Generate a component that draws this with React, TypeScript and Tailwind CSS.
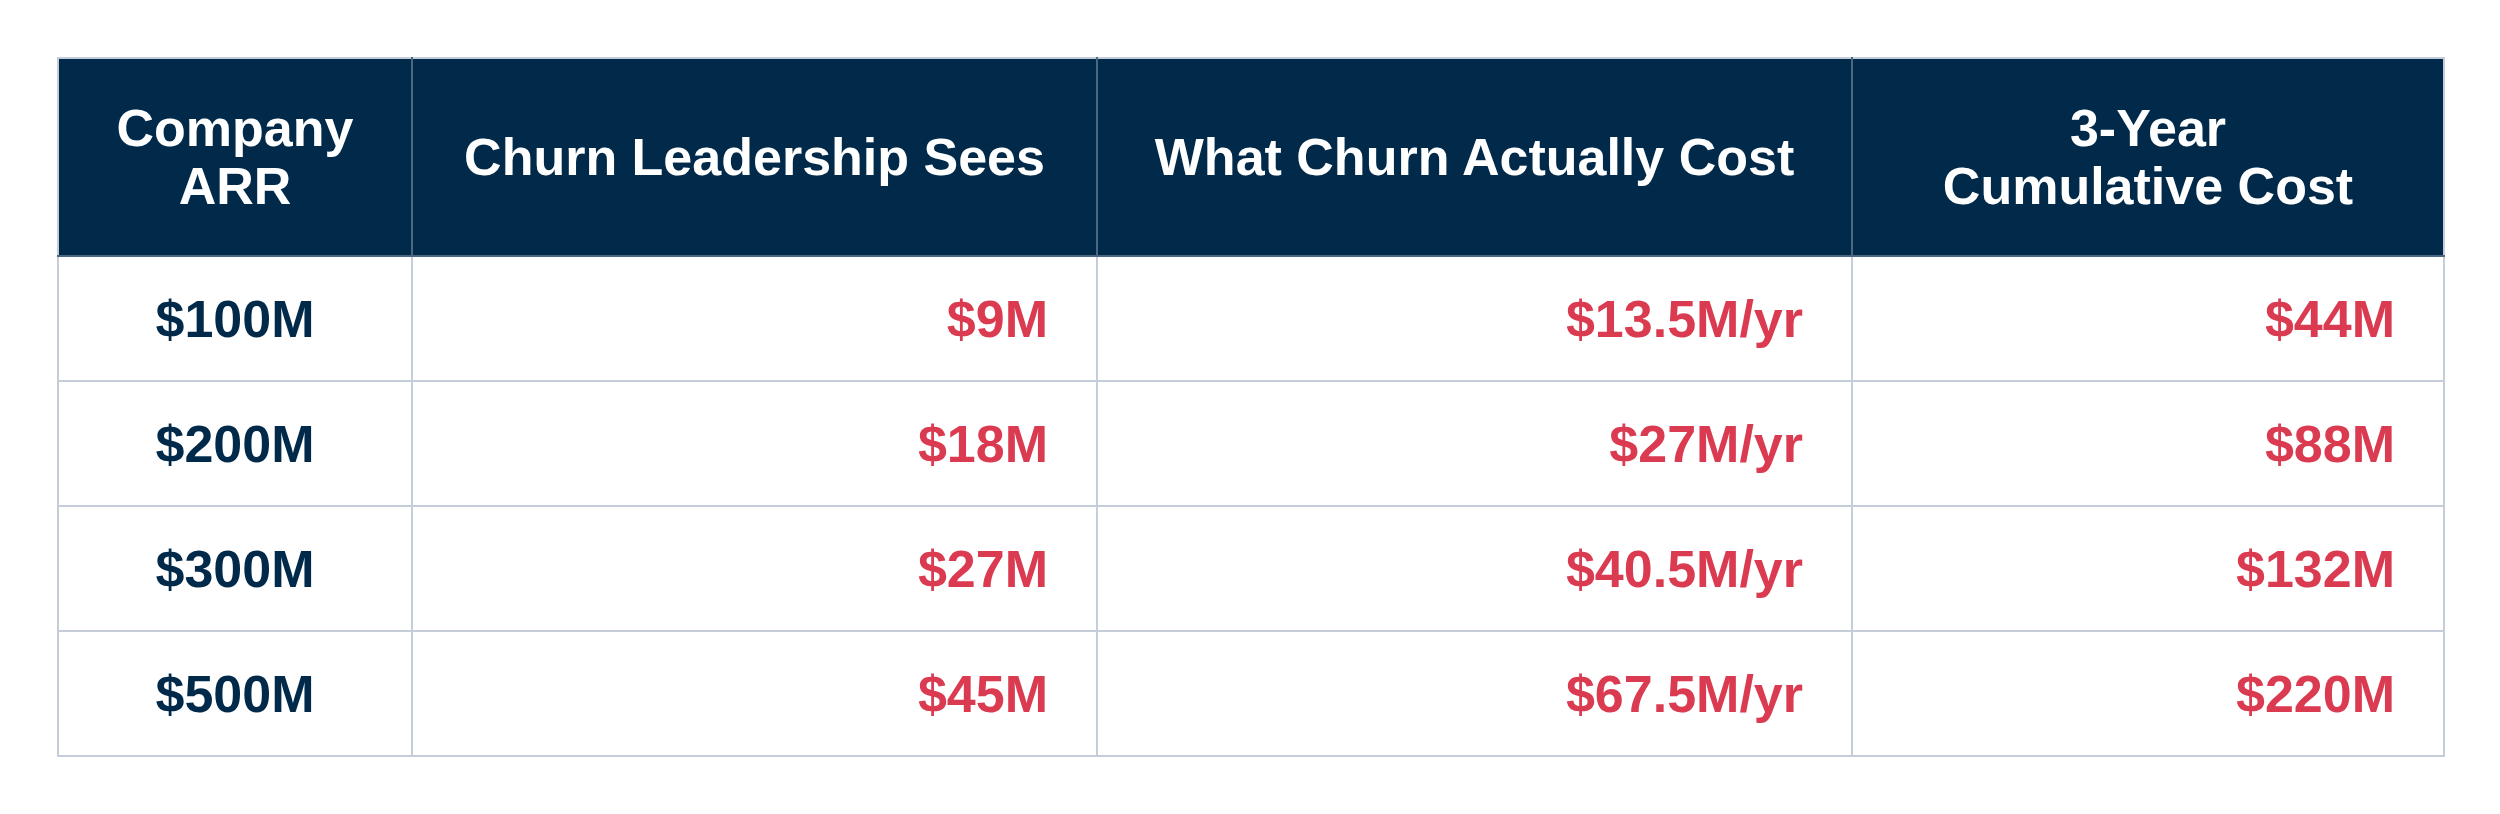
import React from 'react';

type Row = {
  arr: string;
  seen: string;
  actual: string;
  cumulative: string;
};

const rows: Row[] = [
  { arr: '$100M', seen: '$9M', actual: '$13.5M/yr', cumulative: '$44M' },
  { arr: '$200M', seen: '$18M', actual: '$27M/yr', cumulative: '$88M' },
  { arr: '$300M', seen: '$27M', actual: '$40.5M/yr', cumulative: '$132M' },
  { arr: '$500M', seen: '$45M', actual: '$67.5M/yr', cumulative: '$220M' },
];

export default function App() {
  return (
    <div className="w-[2500px] h-[814px] bg-white pt-[57px] pl-[57px] font-['Liberation_Sans',Arial,sans-serif]">
      <table className="border-collapse table-fixed w-[2388px] border-2 border-[#c4cdd9]">
        <colgroup>
          <col className="w-[354px]" />
          <col className="w-[685px]" />
          <col className="w-[755px]" />
          <col className="w-[592px]" />
        </colgroup>
        <thead>
          <tr className="h-[198px] bg-[#012a4a] text-white text-[52px] font-bold leading-[58px]">
            <th className="border-2 border-[#4c6782] border-t-[#c4cdd9] border-l-[#c4cdd9] text-center font-bold">
              Company
              <br />
              ARR
            </th>
            <th className="border-2 border-[#4c6782] border-t-[#c4cdd9] text-center font-bold">
              Churn Leadership Sees
            </th>
            <th className="border-2 border-[#4c6782] border-t-[#c4cdd9] text-center font-bold">
              What Churn Actually Cost
            </th>
            <th className="border-2 border-[#4c6782] border-t-[#c4cdd9] border-r-[#c4cdd9] text-center font-bold">
              3-Year
              <br />
              Cumulative Cost
            </th>
          </tr>
        </thead>
        <tbody>
          {rows.map((r) => (
            <tr key={r.arr} className="h-[125px] text-[52px] font-bold">
              <td className="border-2 border-[#c4cdd9] text-center text-[#012a4a]">{r.arr}</td>
              <td className="border-2 border-[#c4cdd9] text-right pr-[48px] text-[#da3b50]">{r.seen}</td>
              <td className="border-2 border-[#c4cdd9] text-right pr-[48px] text-[#da3b50]">{r.actual}</td>
              <td className="border-2 border-[#c4cdd9] text-right pr-[48px] text-[#da3b50]">{r.cumulative}</td>
            </tr>
          ))}
        </tbody>
      </table>
    </div>
  );
}
